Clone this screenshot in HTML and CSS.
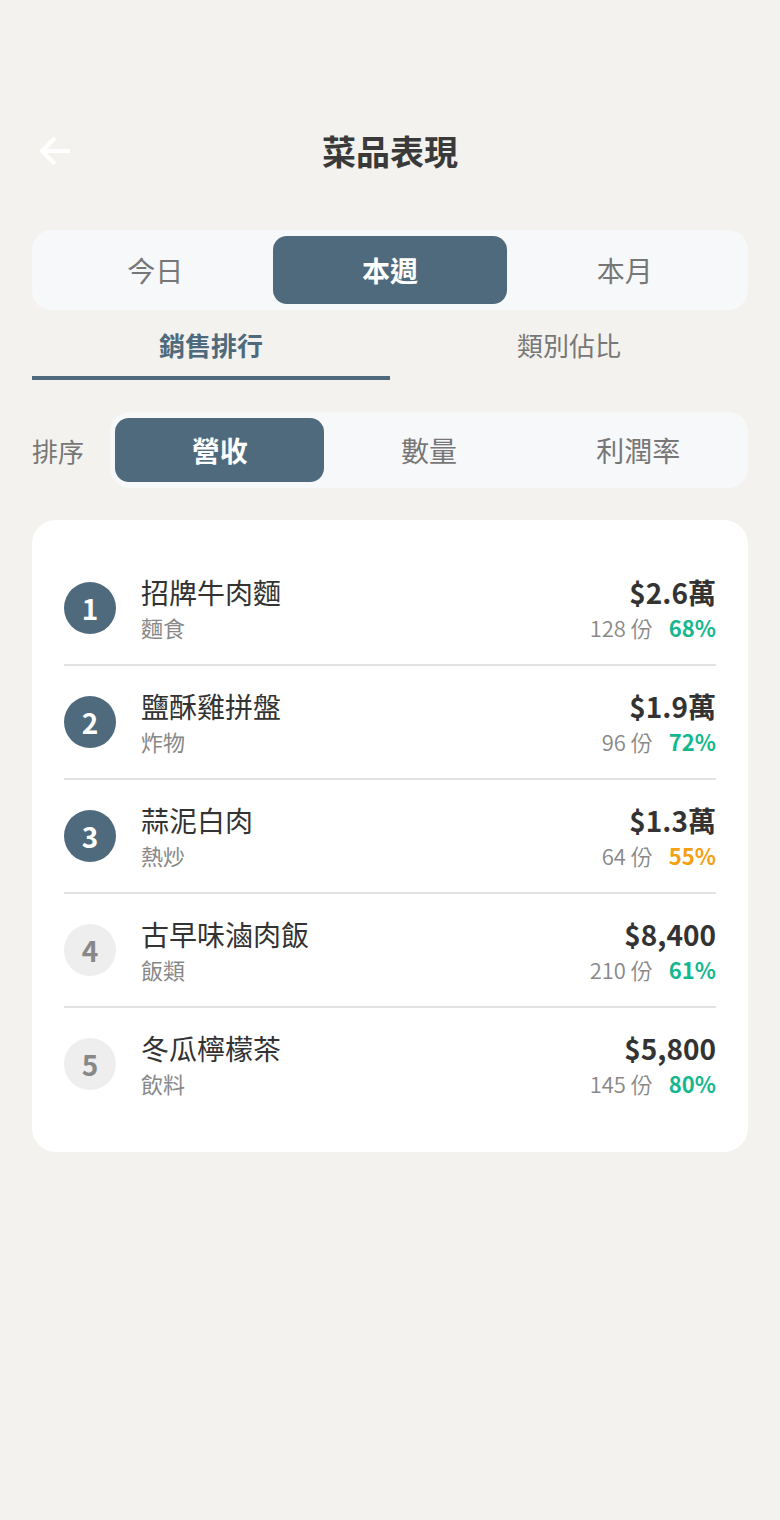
FILE: index.html
```html
<!DOCTYPE html>
<html lang="zh-Hant">
<head>
<meta charset="UTF-8">
<meta name="viewport" content="width=device-width, initial-scale=1.0">
<title>菜品表現</title>
<link rel="stylesheet" href="styles.css">
</head>
<body>
<div class="page">
  <div class="header">
    <svg class="back" width="34" height="34" viewBox="0 0 34 34">
      <path d="M32 17H5M17 4L4 17L17 30" fill="none" stroke="#fff" stroke-width="4" stroke-linejoin="miter"/>
    </svg>
    <h1>菜品表現</h1>
  </div>

  <div class="segment period">
    <div class="seg-item">今日</div>
    <div class="seg-item active">本週</div>
    <div class="seg-item">本月</div>
  </div>

  <div class="tabs">
    <div class="tab active">銷售排行</div>
    <div class="tab">類別佔比</div>
  </div>

  <div class="sort-row">
    <span class="sort-label">排序</span>
    <div class="segment sort">
      <div class="seg-item active">營收</div>
      <div class="seg-item">數量</div>
      <div class="seg-item">利潤率</div>
    </div>
  </div>

  <div class="card">
    <div class="row">
      <div class="rank top">1</div>
      <div class="info"><div class="name">招牌牛肉麵</div><div class="cat">麵食</div></div>
      <div class="stats"><div class="rev">$2.6萬</div><div class="sub"><span class="qty">128 份</span><span class="pct good">68%</span></div></div>
    </div>
    <div class="row">
      <div class="rank top">2</div>
      <div class="info"><div class="name">鹽酥雞拼盤</div><div class="cat">炸物</div></div>
      <div class="stats"><div class="rev">$1.9萬</div><div class="sub"><span class="qty">96 份</span><span class="pct good">72%</span></div></div>
    </div>
    <div class="row">
      <div class="rank top">3</div>
      <div class="info"><div class="name">蒜泥白肉</div><div class="cat">熱炒</div></div>
      <div class="stats"><div class="rev">$1.3萬</div><div class="sub"><span class="qty">64 份</span><span class="pct warn">55%</span></div></div>
    </div>
    <div class="row">
      <div class="rank">4</div>
      <div class="info"><div class="name">古早味滷肉飯</div><div class="cat">飯類</div></div>
      <div class="stats"><div class="rev">$8,400</div><div class="sub"><span class="qty">210 份</span><span class="pct good">61%</span></div></div>
    </div>
    <div class="row">
      <div class="rank">5</div>
      <div class="info"><div class="name">冬瓜檸檬茶</div><div class="cat">飲料</div></div>
      <div class="stats"><div class="rev">$5,800</div><div class="sub"><span class="qty">145 份</span><span class="pct good">80%</span></div></div>
    </div>
  </div>
</div>
</body>
</html>
```

FILE: styles.css
```css
body {
  margin: 0;
  padding: 0;
  background-color: #f3f2ef;
  font-family: "Noto Sans CJK TC", "Noto Sans", sans-serif;
  color: #333;
}
.page {
  padding: 110px 32px 0;
}
.header {
  position: relative;
  height: 80px;
  display: flex;
  align-items: center;
  justify-content: center;
}
.header .back {
  position: absolute;
  left: 6px;
  top: 24px;
}
.header h1 {
  margin: 0;
  font-size: 34px;
  font-weight: 700;
  color: #3a3a3a;
}
.segment {
  display: grid;
  grid-template-columns: 1fr 1fr 1fr;
  padding: 6px;
  background-color: #f7f8fa;
  border-radius: 20px;
}
.period {
  margin-top: 40px;
}
.seg-item {
  display: flex;
  align-items: center;
  justify-content: center;
  font-size: 28px;
  color: #777;
  border-radius: 14px;
}
.period .seg-item {
  height: 68px;
}
.seg-item.active {
  background-color: #4f6a7c;
  color: #fff;
  font-weight: 700;
}
.tabs {
  display: flex;
}
.tab {
  flex: 1;
  height: 63px;
  padding-top: 3px;
  display: flex;
  align-items: center;
  justify-content: center;
  font-size: 26px;
  color: #777;
  border-bottom: 4px solid transparent;
}
.tab.active {
  color: #4f6a7c;
  font-weight: 700;
  border-bottom-color: #4f6a7c;
}
.sort-row {
  display: flex;
  align-items: center;
  margin-top: 32px;
  gap: 26px;
}
.sort-label {
  font-size: 26px;
  color: #777;
  white-space: nowrap;
}
.sort {
  flex: 1;
  padding: 6px 5px;
}
.sort .seg-item {
  height: 64px;
}
.card {
  margin-top: 32px;
  background-color: #fff;
  border-radius: 24px;
  padding: 32px 32px;
}
.row {
  display: flex;
  align-items: center;
  height: 112px;
  border-bottom: 2px solid #e2e2e2;
}
.row:last-child {
  border-bottom: none;
}
.rank {
  width: 52px;
  height: 52px;
  border-radius: 50%;
  background-color: #eeeeee;
  color: #888;
  font-size: 28px;
  font-weight: 700;
  display: flex;
  align-items: center;
  justify-content: center;
  flex-shrink: 0;
}
.rank.top {
  background-color: #4f6a7c;
  color: #fff;
}
.info {
  flex: 1;
  margin-left: 25px;
}
.name {
  font-size: 28px;
  line-height: 36px;
  color: #333;
}
.cat {
  font-size: 22px;
  line-height: 30px;
  margin-top: 2px;
  color: #888;
}
.stats {
  text-align: right;
}
.rev {
  font-size: 28px;
  line-height: 36px;
  font-weight: 700;
  color: #333;
}
.sub {
  font-size: 22px;
  line-height: 30px;
  margin-top: 2px;
}
.qty {
  color: #888;
  font-weight: 350;
}
.pct {
  font-weight: 700;
  margin-left: 16px;
}
.pct.good {
  color: #15b88e;
}
.pct.warn {
  color: #f5a00f;
}
```
